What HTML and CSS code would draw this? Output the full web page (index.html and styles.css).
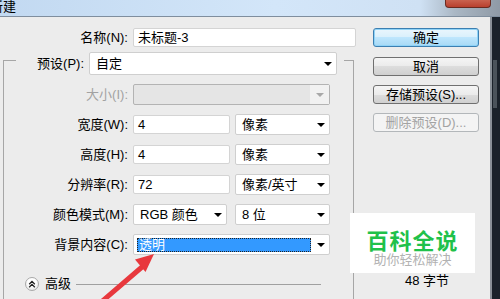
FILE: index.html
```html
<!DOCTYPE html>
<html lang="zh-CN">
<head>
<meta charset="utf-8">
<title>新建</title>
<link rel="stylesheet" href="styles.css">
</head>
<body>
<div class="screen">
  <div class="titlebar">
    <span class="title">新建</span>
    <span class="close"></span>
  </div>
  <div class="main">
    <div class="dialog">
      <div class="form">
        <div class="name-row">
          <label class="lbl">名称(N):</label>
          <div class="field name-field">未标题-3</div>
        </div>
        <div class="group">
          <div class="preset-row">
            <label class="lbl">预设(P):</label>
            <div class="combo preset-combo"><span>自定</span><i class="caret"></i></div>
          </div>
          <div class="rows">
            <label class="lbl disabled">大小(I):</label>
            <div class="ctrls">
              <div class="combo combo-disabled wide"><span></span><span class="caret-box"><i class="caret gray"></i></span></div>
            </div>

            <label class="lbl">宽度(W):</label>
            <div class="ctrls">
              <div class="field num">4</div>
              <div class="combo unit"><span>像素</span><i class="caret"></i></div>
            </div>

            <label class="lbl">高度(H):</label>
            <div class="ctrls">
              <div class="field num">4</div>
              <div class="combo unit"><span>像素</span><i class="caret"></i></div>
            </div>

            <label class="lbl">分辨率(R):</label>
            <div class="ctrls">
              <div class="field num">72</div>
              <div class="combo unit"><span>像素/英寸</span><i class="caret"></i></div>
            </div>

            <label class="lbl">颜色模式(M):</label>
            <div class="ctrls">
              <div class="combo mode"><span>RGB 颜色</span><i class="caret"></i></div>
              <div class="combo unit"><span>8 位</span><i class="caret"></i></div>
            </div>

            <label class="lbl">背景内容(C):</label>
            <div class="ctrls">
              <div class="combo wide bg-combo"><span class="selected">透明</span><i class="caret"></i></div>
            </div>
          </div>
          <div class="advanced">
            <span class="adv-btn">
              <svg width="14" height="14" viewBox="0 0 14 14"><path d="M4.2 7.2 L7 4.4 L9.8 7.2 M4.2 10.2 L7 7.4 L9.8 10.2" fill="none" stroke="#222" stroke-width="1.3"/></svg>
            </span>
            <span class="adv-label">高级</span>
            <span class="adv-line"></span>
          </div>
        </div>
      </div>
      <div class="side">
        <div class="btn default">确定</div>
        <div class="btn">取消</div>
        <div class="btn">存储预设(S)...</div>
        <div class="btn disabled">删除预设(D)...</div>
        <div class="imgsize">48 字节</div>
      </div>
    </div>
    <div class="frame"><div class="frame-bar"></div></div>
  </div>

  <div class="watermark">
    <div class="wm-title">百科全说</div>
    <div class="wm-sub">助你轻松解决</div>
  </div>

  <svg class="arrow" width="500" height="299" viewBox="0 0 500 299">
    <line x1="99" y1="304" x2="142" y2="267" stroke="#e8383d" stroke-width="5" stroke-linecap="round"/>
    <polygon points="154,254 145.5,272 135,259.5" fill="#e8383d"/>
  </svg>
</div>
</body>
</html>
```

FILE: styles.css
```css
* {
  box-sizing: border-box;
  margin: 0;
  padding: 0;
}

html,
body {
  width: 500px;
  height: 299px;
  overflow: hidden;
}

body {
  background: #ececec;
  font-family: "Liberation Sans", "Noto Sans CJK SC", sans-serif;
  font-size: 13px;
  color: #000;
}

.screen {
  position: relative;
  width: 500px;
  height: 299px;
  overflow: hidden;
}

/* title bar */
.titlebar {
  height: 17px;
  display: flex;
  align-items: flex-start;
  border-bottom: 1px solid #7f8e9e;
  background: linear-gradient(to right, #c2d9f1 0%, #d3e6f9 55%, #cfe1f4 84%, #aab7c4 91%, #8f9aa6 100%);
}

.title {
  margin-left: -10px;
  font-size: 13px;
  line-height: 13px;
}

.close {
  margin-left: auto;
  margin-right: 9px;
  width: 46px;
  height: 8px;
  border: 1px solid #6a2a20;
  border-top: none;
  border-radius: 0 0 4px 4px;
  background: linear-gradient(#c9624f, #b9402e);
}

/* main */
.main {
  display: flex;
  height: 282px;
}

.dialog {
  width: 492px;
  display: flex;
  background: #ececec;
  border-right: 2px solid #8a9098;
}

.frame {
  flex: 1;
  background: #1b222b;
}

.frame-bar {
  margin: 43px 0 0 1px;
  width: 4px;
  height: 48px;
  background: #4b535b;
}

.form {
  width: 360px;
  padding-top: 11px;
}

.lbl {
  text-align: right;
  white-space: nowrap;
  line-height: 17px;
}

.lbl.disabled {
  color: #a2a2a2;
}

.name-row {
  display: grid;
  grid-template-columns: 128px 223px;
  column-gap: 5px;
  align-items: center;
  height: 19px;
}

.field {
  height: 19px;
  background: #fff;
  border: 1px solid #d4d4d4;
  border-radius: 2px;
  padding-left: 4px;
  line-height: 17px;
  white-space: nowrap;
}

.num {
  width: 97px;
}

/* group box */
.group {
  margin: 13px 0 0 3px;
  width: 351px;
  height: 300px;
  border: 1px solid #a6a6a6;
}

.preset-row {
  margin: -9px 9px 0 12px;
  height: 23px;
  display: flex;
  justify-content: flex-end;
  align-items: center;
  gap: 5px;
  padding-right: 7px;
  background: #ececec;
}

.combo {
  height: 21px;
  display: flex;
  align-items: center;
  justify-content: space-between;
  padding: 0 4px 0 6px;
  background: #fff;
  border: 1px solid #cfcfcf;
  border-radius: 2px;
  line-height: 17px;
  white-space: nowrap;
}

.preset-combo {
  width: 248px;
  height: 23px;
}

.caret {
  display: block;
  width: 0;
  height: 0;
  border-left: 4px solid transparent;
  border-right: 4px solid transparent;
  border-top: 4px solid #000;
}

.caret.gray {
  border-top-color: #a8a8a8;
}

.rows {
  margin-top: 9px;
  display: grid;
  grid-template-columns: 124px 1fr;
  column-gap: 5px;
  row-gap: 9px;
  grid-auto-rows: 21px;
  align-items: center;
}

.ctrls {
  display: flex;
  align-items: center;
  gap: 5px;
}

.unit {
  width: 95px;
}

.mode {
  width: 94px;
  margin-right: 3px;
}

.wide {
  width: 197px;
}

.combo-disabled {
  padding: 0;
  background: #e5e5e5;
  border-color: #b3b3b3;
}

.caret-box {
  width: 19px;
  height: 100%;
  display: flex;
  align-items: center;
  justify-content: center;
  background: #f1f1f1;
}

.bg-combo {
  padding-left: 3px;
}

.selected {
  width: 174px;
  height: 14px;
  background: #3399ff;
  border: 1px dotted #222;
  color: #fff;
  line-height: 12px;
  padding-left: 1px;
}

/* advanced */
.advanced {
  margin-top: 22px;
  padding-left: 21px;
  display: flex;
  align-items: center;
  height: 14px;
}

.adv-btn {
  width: 14px;
  height: 14px;
  border-radius: 50%;
  border: 1px solid #a9a9a9;
  background: radial-gradient(circle at 50% 35%, #ffffff 40%, #dedede 100%);
  display: flex;
  align-items: center;
  justify-content: center;
}

.adv-btn svg {
  display: block;
  margin: -1px;
}

.adv-label {
  margin-left: 6px;
  line-height: 14px;
}

.adv-line {
  margin-left: 5px;
  width: 245px;
  height: 1px;
  background: #a0a0a0;
}

/* right column */
.side {
  flex: 1;
  display: flex;
  flex-direction: column;
  padding: 11px 0 0 13px;
}

.btn {
  width: 106px;
  height: 19px;
  border: 1px solid #707070;
  border-radius: 3px;
  background: linear-gradient(#f5f5f5, #ebebeb 50%, #dddddd 50%, #d0d0d0);
  text-align: center;
  line-height: 17px;
  white-space: nowrap;
}

.btn + .btn {
  margin-top: 9px;
}

.btn.default {
  margin-bottom: 1px;
  border-color: #3c7fb1;
  background: linear-gradient(#eaf6fd, #d9f0fc 50%, #bee6fd 50%, #a7d9f5);
  box-shadow: inset 0 0 0 1px #8fd3f7;
}

.btn.disabled {
  border-color: #b3b7ba;
  background: #f4f4f4;
  color: #a3a3a3;
}

.imgsize {
  margin-top: 142px;
  padding-left: 32px;
  line-height: 14px;
}

/* overlays */
.watermark {
  position: absolute;
  left: 350px;
  top: 213px;
  width: 125px;
  height: 60px;
  background: #fff;
  display: flex;
  flex-direction: column;
  align-items: center;
}

.wm-title {
  margin-top: 15px;
  font-family: "Noto Sans CJK SC", sans-serif;
  font-weight: bold;
  font-size: 22px;
  line-height: 22px;
  letter-spacing: 1px;
  color: #1fc14a;
}

.wm-sub {
  margin-top: 2px;
  font-family: "Noto Sans CJK SC", sans-serif;
  font-size: 13px;
  line-height: 14px;
  color: #b2b2b2;
}

.arrow {
  position: absolute;
  left: 0;
  top: 0;
  pointer-events: none;
}
```
